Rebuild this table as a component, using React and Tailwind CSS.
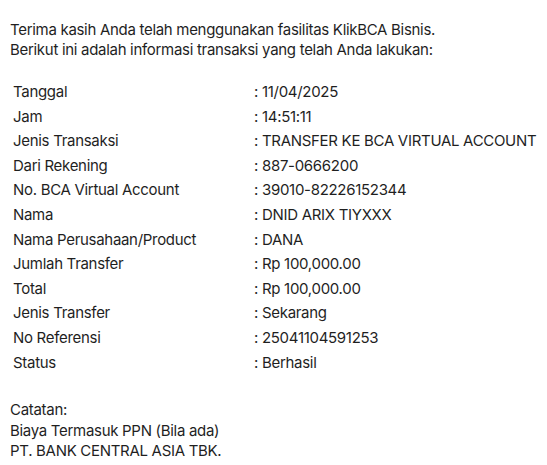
import React from "react";

const rows = [
  ["Tanggal", "11/04/2025"],
  ["Jam", "14:51:11"],
  ["Jenis Transaksi", "TRANSFER KE BCA VIRTUAL ACCOUNT"],
  ["Dari Rekening", "887-0666200"],
  ["No. BCA Virtual Account", "39010-82226152344"],
  ["Nama", "DNID ARIX TIYXXX"],
  ["Nama Perusahaan/Product", "DANA"],
  ["Jumlah Transfer", "Rp 100,000.00"],
  ["Total", "Rp 100,000.00"],
  ["Jenis Transfer", "Sekarang"],
  ["No Referensi", "25041104591253"],
  ["Status", "Berhasil"],
];

export default function App() {
  return (
    <div className="w-[547px] h-[465px] bg-white text-[#1f1f1f] font-['Inter',sans-serif] text-[15px] tracking-[-0.3px] pl-[10px] pt-[20px] overflow-hidden">
      {/* intro */}
      <p className="leading-[20px]">Terima kasih Anda telah menggunakan fasilitas KlikBCA Bisnis.</p>
      <p className="leading-[20px]">Berikut ini adalah informasi transaksi yang telah Anda lakukan:</p>

      {/* detail rows */}
      <div className="mt-[20px] pl-[3px]">
        {rows.map(([label, value]) => (
          <div key={label} className="flex h-[24.6px] items-center whitespace-nowrap">
            <span className="w-[241px] shrink-0">{label}</span>
            <span>: {value}</span>
          </div>
        ))}
      </div>

      {/* footer */}
      <div className="mt-[25px] leading-[20.5px]">
        <p>Catatan:</p>
        <p>Biaya Termasuk PPN (Bila ada)</p>
        <p>PT. BANK CENTRAL ASIA TBK.</p>
      </div>
    </div>
  );
}
